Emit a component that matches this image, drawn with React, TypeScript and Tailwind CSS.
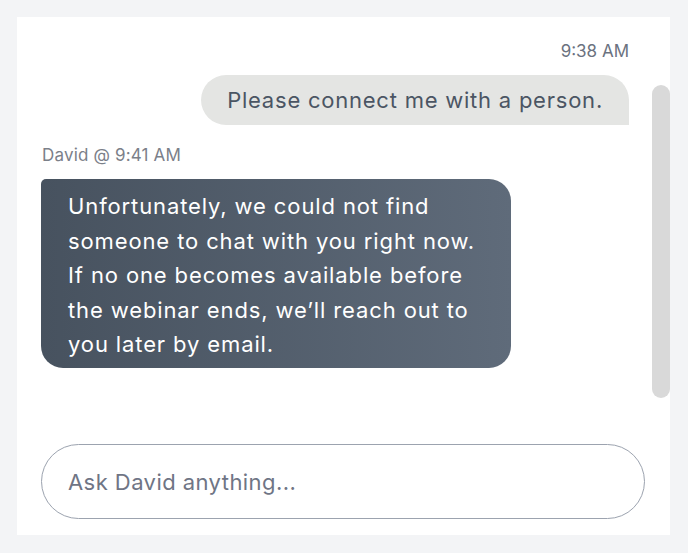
export default function App() {
  return (
    <div
      className="min-h-screen bg-[#f3f4f6] p-[17px] pr-[18px]"
      style={{ fontFamily: "Inter, 'Noto Sans', sans-serif" }}
    >
      <div className="flex h-[518px] flex-col bg-white">
        <div className="flex flex-1">
          <div className="flex flex-1 flex-col pl-[24px] pr-[23px] pt-[24px]">
            <div className="text-right text-[17px] leading-[20px] text-[#6b7280]">9:38 AM</div>
            <div className="mt-[14px] flex justify-end">
              <div className="rounded-[25px] rounded-br-none bg-[#e4e5e3] px-[26px] py-[11px] text-[22px] leading-[28px] tracking-[0.035em] text-[#4b5563]">
                Please connect me with a person.
              </div>
            </div>
            <div className="mt-[20px] pl-px text-[17px] leading-[20px] tracking-[0.01em] text-[#7b8089]">David @ 9:41 AM</div>
            <div className="mt-[14px] flex">
              <div className="w-[470px] rounded-[22px] rounded-tl-[5px] bg-gradient-to-r from-[#47525f] to-[#5f6b7a] px-[27px] pb-[6px] pt-[10px] text-[22px] leading-[34.5px] tracking-[0.04em] text-white">
                Unfortunately, we could not find
                <br />
                someone to chat with you right now.
                <br />
                If no one becomes available before
                <br />
                the webinar ends, we’ll reach out to
                <br />
                you later by email.
              </div>
            </div>
          </div>
          <div className="w-[18px] pt-[68px]">
            <div className="h-[313px] rounded-full bg-[#d9d9d9]" />
          </div>
        </div>
        <div className="px-[24px] pb-[16px] pr-[25px]">
          <input
            placeholder="Ask David anything..."
            className="h-[75px] w-full rounded-full border-[1.5px] border-[#9ca3af] px-[26px] text-[22px] tracking-[0.02em] text-[#374151] outline-none placeholder:text-[#6f7585]"
          />
        </div>
      </div>
    </div>
  )
}
